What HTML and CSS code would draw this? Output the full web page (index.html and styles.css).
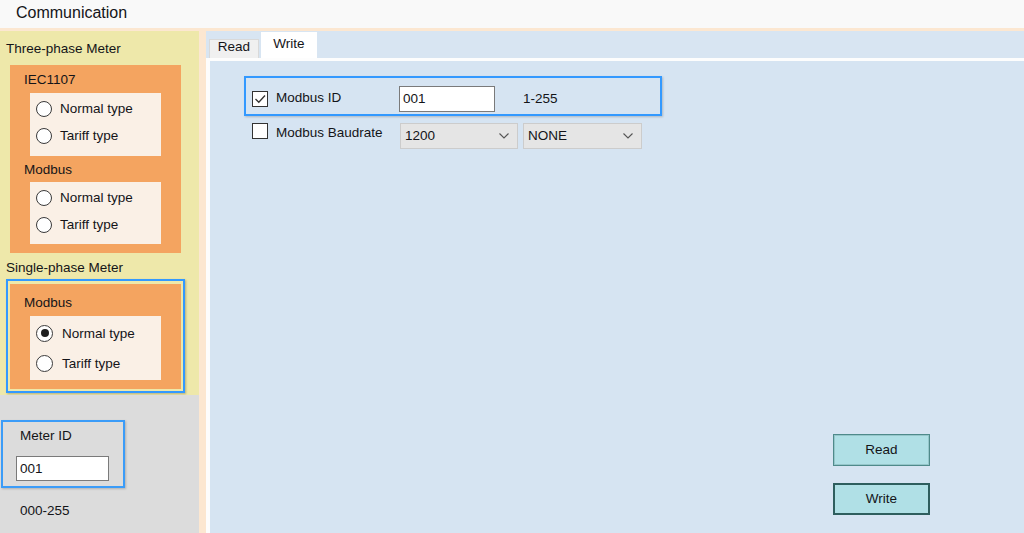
FILE: index.html
```html
<!DOCTYPE html>
<html>
<head>
<meta charset="utf-8">
<title>Communication</title>
<link rel="stylesheet" href="styles.css">
</head>
<body>
<div class="window">
  <div class="titlebar">Communication</div>
  <div class="main">
    <div class="left">
      <div class="meters">
        <div class="caption">Three-phase Meter</div>
        <div class="group three">
          <div class="group-title">IEC1107</div>
          <div class="options">
            <div class="opt"><span class="radio"></span>Normal type</div>
            <div class="opt"><span class="radio"></span>Tariff type</div>
          </div>
          <div class="group-title second">Modbus</div>
          <div class="options short">
            <div class="opt"><span class="radio"></span>Normal type</div>
            <div class="opt"><span class="radio"></span>Tariff type</div>
          </div>
        </div>
        <div class="caption single-cap">Single-phase Meter</div>
        <div class="focus-box">
          <div class="group single">
            <div class="group-title">Modbus</div>
            <div class="options tall">
              <div class="opt"><span class="radio checked"></span>Normal type</div>
              <div class="opt"><span class="radio"></span>Tariff type</div>
            </div>
          </div>
        </div>
      </div>
      <div class="meter-area">
        <div class="meter-id">
          <div class="meter-label">Meter ID</div>
          <div class="field meter-field">001</div>
        </div>
        <div class="range">000-255</div>
      </div>
    </div>
    <div class="right">
      <div class="tabs">
        <div class="tab tab-read">Read</div>
        <div class="tab tab-write">Write</div>
      </div>
      <div class="content">
        <div class="row row-id">
          <span class="check checked">
            <svg width="14" height="14" viewBox="0 0 14 14"><polyline points="2.5,7 5.8,10.3 12,3.5" fill="none" stroke="#333" stroke-width="1.3"/></svg>
          </span>
          <span class="row-label">Modbus ID</span>
          <div class="field id-field">001</div>
          <span class="hint">1-255</span>
        </div>
        <div class="row row-baud">
          <span class="check"></span>
          <span class="row-label">Modbus Baudrate</span>
          <div class="select sel-baud">1200
            <svg class="chev" width="10" height="6" viewBox="0 0 10 6"><polyline points="0.5,0.5 5,5 9.5,0.5" fill="none" stroke="#555" stroke-width="1.1"/></svg>
          </div>
          <div class="select sel-parity">NONE
            <svg class="chev" width="10" height="6" viewBox="0 0 10 6"><polyline points="0.5,0.5 5,5 9.5,0.5" fill="none" stroke="#555" stroke-width="1.1"/></svg>
          </div>
        </div>
        <div class="actions">
          <div class="btn btn-read">Read</div>
          <div class="btn btn-write">Write</div>
        </div>
      </div>
    </div>
  </div>
</div>
</body>
</html>
```
FILE: styles.css
```css
body {
  margin: 0;
  font-family: "Liberation Sans", Arial, sans-serif;
  font-size: 13.5px;
  color: #141418;
}

.window {
  width: 1024px;
  height: 533px;
  overflow: hidden;
  display: flex;
  flex-direction: column;
  background: #fce7d1;
}

.titlebar {
  height: 28px;
  flex: none;
  background: #f9f9f9;
  padding-left: 16px;
  font-size: 16px;
  line-height: 26px;
}

.main {
  flex: 1;
  min-height: 0;
  display: flex;
  gap: 7px;
  padding-top: 3px;
}

.left {
  width: 199px;
  flex: none;
  display: flex;
  flex-direction: column;
}

.meters {
  height: 364px;
  flex: none;
  box-sizing: border-box;
  background: #eee8aa;
  padding-top: 9px;
}

.caption {
  line-height: 18px;
  padding-left: 6px;
}

.single-cap {
  margin-top: 6px;
}

.group {
  background: #f4a460;
  width: 171px;
  box-sizing: border-box;
  padding: 6px 0 9px 14px;
}

.three {
  margin-left: 10px;
  margin-top: 7px;
}

.group-title {
  line-height: 18px;
}

.group-title.second {
  margin-top: 5px;
}

.options {
  background: #faf0e6;
  width: 131px;
  height: 63px;
  box-sizing: border-box;
  margin-left: 6px;
  margin-top: 4px;
  padding: 2px 0 0 6px;
}

.options.short {
  height: 62px;
  margin-top: 3px;
}

.opt {
  height: 27px;
  display: flex;
  align-items: center;
  gap: 8px;
}

.radio {
  width: 16px;
  height: 16px;
  box-sizing: border-box;
  border: 1px solid #3a3a3a;
  border-radius: 50%;
  background: #fff;
  display: flex;
  align-items: center;
  justify-content: center;
  flex: none;
}

.radio.checked::after {
  content: "";
  width: 8px;
  height: 8px;
  border-radius: 50%;
  background: #1e1e1e;
}

.focus-box {
  margin-top: 2px;
  margin-left: 6px;
  width: 179px;
  box-sizing: border-box;
  border: 2px solid #3399ff;
  padding: 3px 2px 2px 2px;
  box-shadow: 1px 1px 2px rgba(0, 0, 0, 0.25);
}

.single {
  padding-top: 10px;
}

.options.tall {
  height: 64px;
}

.options.tall .opt {
  height: 30px;
  gap: 9px;
}

.options.tall .radio {
  width: 17px;
  height: 17px;
}

.meter-area {
  flex: 1;
  background: #dcdcdc;
  padding-top: 25px;
}

.meter-id {
  margin-left: 1px;
  width: 124px;
  height: 68px;
  box-sizing: border-box;
  border: 2px solid #3b9cf8;
  padding: 5px 0 0 15px;
  box-shadow: 1px 1px 2px rgba(0, 0, 0, 0.2);
}

.meter-label {
  line-height: 18px;
  padding-left: 2px;
}

.field {
  box-sizing: border-box;
  height: 25px;
  background: #fff;
  border: 1px solid #7a7a7a;
  padding-left: 3px;
  line-height: 23px;
}

.meter-field {
  width: 93px;
  margin-top: 11px;
  margin-left: -2px;
}

.range {
  margin-top: 14px;
  padding-left: 20px;
  line-height: 18px;
}

.right {
  flex: 1;
  display: flex;
  flex-direction: column;
}

.tabs {
  height: 27px;
  flex: none;
  display: flex;
  align-items: flex-end;
  gap: 2px;
  padding-left: 3px;
  background: #d8e5f2;
}

.tab {
  box-sizing: border-box;
  text-align: center;
}

.tab-read {
  width: 50px;
  height: 19px;
  background: #f0f0f0;
  border: 1px solid #d9d9d9;
  border-bottom: none;
  line-height: 14px;
}

.tab-write {
  width: 56px;
  height: 26px;
  background: #fff;
  line-height: 23px;
}

.content {
  flex: 1;
  display: flex;
  flex-direction: column;
  background: #d6e4f2;
  border-top: 3px solid #fdfdfd;
  border-left: 4px solid #fdfdfd;
  padding: 15px 0 0 34px;
}

.row {
  display: flex;
  align-items: center;
}

.row-id {
  width: 418px;
  height: 40px;
  box-sizing: border-box;
  border: 2px solid #3399ff;
  padding: 5px 0 0 6px;
  box-shadow: 1px 1px 2px rgba(0, 0, 0, 0.2);
}

.check {
  width: 16px;
  height: 16px;
  box-sizing: border-box;
  border: 1px solid #333;
  background: #fff;
  flex: none;
  display: flex;
  align-items: center;
  justify-content: center;
}

.row-label {
  margin-left: 8px;
  width: 123px;
  flex: none;
}

.row-id .row-label {
  margin-top: -3px;
}

.id-field {
  width: 96px;
  height: 26px;
  line-height: 24px;
}

.hint {
  margin-left: 28px;
}

.row-baud {
  margin-top: 7px;
  height: 26px;
  align-items: flex-start;
  padding-left: 8px;
}

.row-baud .check {
  margin-top: 0;
}

.row-baud .row-label {
  line-height: 18px;
  margin-top: 1px;
  width: 124px;
}

.select {
  height: 26px;
  box-sizing: border-box;
  background: #e5e5e5;
  border: 1px solid #cccccc;
  padding-left: 4px;
  line-height: 24px;
  display: flex;
  justify-content: space-between;
  align-items: center;
  padding-right: 8px;
}

.sel-baud {
  width: 118px;
}

.sel-parity {
  width: 119px;
  margin-left: 5px;
}

.actions {
  margin-top: auto;
  align-self: flex-end;
  margin-right: 94px;
  margin-bottom: 18px;
  display: flex;
  flex-direction: column;
  gap: 17px;
}

.btn {
  width: 97px;
  height: 32px;
  box-sizing: border-box;
  background: #b0e0e6;
  text-align: center;
  line-height: 28px;
}

.btn-read {
  border: 1px solid #4f8a8b;
  box-shadow: inset 0 0 0 1px #95c6ca;
  line-height: 29px;
}

.btn-write {
  border: 2px solid #2e5e5e;
}
```
